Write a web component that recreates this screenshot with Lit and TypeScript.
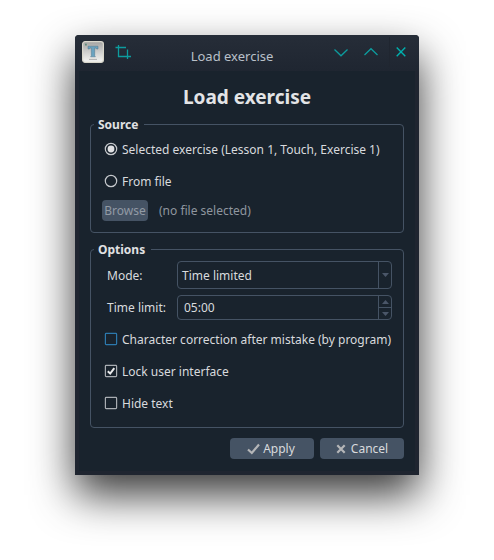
import { LitElement, html, css, svg } from "lit";
import { customElement, property, state } from "lit/decorators.js";
import { classMap } from "lit/directives/class-map.js";

const arrow = (up: boolean) => svg`<path d=${up ? "M0 4L3.5 0L7 4Z" : "M0 0L3.5 4L7 0Z"} fill="#4a5668"/>`;

@customElement("title-bar")
class TitleBar extends LitElement {
  @property() label = "";

  static styles = css`
    :host {
      display: flex;
      height: 36px;
      box-sizing: border-box;
      padding: 0 6px 0 7px;
      background: linear-gradient(#262d38, #1f2631);
      border-radius: 4px 4px 0 0;
      font-size: 13px;
      color: #b9c0c9;
    }
    .app { margin-top: 6px; width: 22px; height: 22px; }
    .crop { margin: 9px 0 0 10px; width: 18px; height: 16px; }
    .label { flex: 1; text-align: center; line-height: 18px; margin-top: 12px; padding-left: 6px; white-space: nowrap; }
    .buttons { display: flex; }
    .wb { width: 30px; height: 34px; }
    .wb.last { width: 24px; margin-left: 3px; }
    svg { display: block; flex: none; }
  `;

  render() {
    return html`
      <svg class="app" viewBox="0 0 22 22">
        <defs>
          <linearGradient id="key" x1="0" y1="0" x2="0" y2="1">
            <stop offset="0" stop-color="#a3a3a2" /><stop offset=".5" stop-color="#cfcfce" /><stop offset="1" stop-color="#f6f6f4" />
          </linearGradient>
        </defs>
        <rect x=".6" y=".6" width="20.8" height="20.8" rx="2.6" fill="url(#key)" stroke="#d9d7cc" stroke-width="1.2" />
        <rect x="3" y="2.7" width="1.8" height="1.8" fill="#5f8b7c" />
        <path d="M6 5.2H16V8H14.6L14 7H12.7V14.8L13.4 15.8H8.6L9.3 14.8V7H8L7.4 8H6Z" fill="#6aa3c0" stroke="#50778c" stroke-width=".5" />
        <path d="M7 18.4H15" stroke="#a8a8a8" stroke-width=".9" />
      </svg>
      <svg class="crop" viewBox="0 0 18 16">
        <path d="M1.5 3.5H12M4.5 1V12.5H17M13.5 5.5V15" fill="none" stroke="#0d9c9e" stroke-width="1.3" />
      </svg>
      <span class="label">${this.label}</span>
      <div class="buttons">
        <svg class="wb" viewBox="0 0 30 34"><path d="M8.5 14.5L15 20.8L21.5 14.5" fill="none" stroke="#0d9c9e" stroke-width="1.3" /></svg>
        <svg class="wb" viewBox="0 0 30 34"><path d="M8.5 20L15 13.7L21.5 20" fill="none" stroke="#0d9c9e" stroke-width="1.3" /></svg>
        <svg class="wb last" viewBox="0 0 24 34"><path d="M.5 2V32" stroke="#202630" stroke-width="1" /><path d="M7.7 12.6L16.3 21.2M16.3 12.6L7.7 21.2" fill="none" stroke="#00b0ae" stroke-width="1.4" /></svg>
      </div>
    `;
  }
}

@customElement("choice-row")
class ChoiceRow extends LitElement {
  @property() kind: "radio" | "check" = "check";
  @property({ type: Boolean }) checked = false;
  @property({ type: Boolean }) hot = false;

  static styles = css`
    :host { display: flex; align-items: center; height: 32px; padding-left: 13px; gap: 4px; white-space: nowrap; }
    svg { width: 14px; height: 14px; flex: none; color: #a9adb2; }
    svg.radio { color: #c6c9cd; }
    svg.hot { color: #2c79ad; }
    .text { padding-top: 2px; }
  `;

  render() {
    return html`
      <svg viewBox="0 0 14 14" class=${classMap({ hot: this.hot, radio: this.kind === "radio" })} fill="none" stroke="currentColor" stroke-width="1.2">
        ${this.kind === "radio"
          ? svg`<circle cx="7" cy="7" r="5.7"/>${this.checked ? svg`<circle cx="7" cy="7" r="3.4" fill="#e0e1e3" stroke="none"/>` : ""}`
          : svg`<rect x="1.4" y="1.4" width="11.2" height="11.2" rx=".8"/>${this.checked ? svg`<path d="M3.8 7.2L6.2 9.6L10.3 4.2" stroke="#e8e9ea" stroke-width="2"/>` : ""}`}
      </svg>
      <span class="text"><slot></slot></span>
    `;
  }
}

@customElement("app-root")
class AppRoot extends LitElement {
  @state() private mode = "Time limited";
  @state() private limit = "05:00";

  static styles = css`
    :host {
      display: block;
      width: 494px;
      height: 560px;
      box-sizing: border-box;
      padding: 35px 75px 0;
      background: #fff;
      overflow: hidden;
      font-family: "Noto Sans", sans-serif;
      font-size: 12px;
      line-height: 18px;
      color: #d8dadd;
    }
    .window {
      width: 344px;
      height: 440px;
      box-sizing: border-box;
      padding: 0 4px 4px;
      background: #1f2530;
      border-radius: 4px 4px 0 0;
      box-shadow: 0 20px 43px rgba(0, 0, 0, 0.78);
    }
    title-bar { margin: 0 -4px; }
    .content {
      height: 400px;
      box-sizing: border-box;
      padding: 0 11px;
      background: #19232d;
      display: flex;
      flex-direction: column;
    }
    h1 { margin: 0; height: 44px; padding-top: 12px; box-sizing: border-box; font-size: 19px; line-height: 28px; text-align: center; color: #e3e4e6; }
    fieldset { margin: 0; padding: 0; box-sizing: border-box; border: 1px solid #455364; border-radius: 4px; min-width: 0; }
    .source { height: 118px; }
    .options { height: 188px; margin-top: 7px; }
    legend { margin-left: 3px; padding: 0 6px 0 4px; height: 19px; line-height: 19px; font-weight: 700; color: #e0e1e3; }
    .source choice-row:first-of-type { margin-top: -1px; }
    .browse { display: flex; align-items: center; gap: 11px; padding: 3px 0 0 11px; color: #8f969f; }
    .btn { display: flex; align-items: center; justify-content: center; height: 21px; border-radius: 4px; background: #455364; color: #d8dadd; box-sizing: border-box; }
    .btn.off { width: 46px; color: #929aa4; }
    .field { display: flex; align-items: center; padding-left: 16px; }
    .field.first { margin: 2px 0 6px; }
    .field.last { margin-bottom: 3px; }
    .name { width: 70px; }
    .first .name, .first .value { padding-top: 2px; }
    .last .name, .last .value { padding-top: 1px; }
    .box { display: flex; width: 215px; height: 28px; box-sizing: border-box; border: 1px solid #455364; border-radius: 4px; }
    .box.spin { height: 25px; }
    .value { flex: 1; padding-left: 4px; align-self: center; }
    .spin .value { padding-left: 6px; }
    .arrows { width: 12px; border-left: 1px solid #455364; display: flex; flex-direction: column; }
    .cell { flex: 1; display: flex; align-items: center; justify-content: center; }
    .cell + .cell { border-top: 1px solid #455364; }
    .cell svg { width: 7px; height: 4px; }
    .actions { display: flex; justify-content: flex-end; gap: 6px; margin-top: 10px; }
    .actions .btn { width: 84px; }
    .actions .apply { padding-right: 2px; }
    .tick { width: 13px; height: 12px; margin-right: 3px; }
    .cross { width: 10px; height: 10px; margin-right: 5px; }
  `;

  render() {
    return html`
      <div class="window">
        <title-bar label="Load exercise"></title-bar>
        <div class="content">
          <h1>Load exercise</h1>
          <fieldset class="source">
            <legend>Source</legend>
            <choice-row kind="radio" checked>Selected exercise (Lesson 1, Touch, Exercise 1)</choice-row>
            <choice-row kind="radio">From file</choice-row>
            <div class="browse"><span class="btn off">Browse</span><span>(no file selected)</span></div>
          </fieldset>
          <fieldset class="options">
            <legend>Options</legend>
            <div class="field first">
              <span class="name">Mode:</span>
              <div class="box">
                <span class="value">${this.mode}</span>
                <div class="arrows"><span class="cell"><svg viewBox="0 0 7 4">${arrow(false)}</svg></span></div>
              </div>
            </div>
            <div class="field last">
              <span class="name">Time limit:</span>
              <div class="box spin">
                <span class="value">${this.limit}</span>
                <div class="arrows">
                  <span class="cell"><svg viewBox="0 0 7 4">${arrow(true)}</svg></span>
                  <span class="cell"><svg viewBox="0 0 7 4">${arrow(false)}</svg></span>
                </div>
              </div>
            </div>
            <choice-row hot>Character correction after mistake (by program)</choice-row>
            <choice-row checked>Lock user interface</choice-row>
            <choice-row>Hide text</choice-row>
          </fieldset>
          <div class="actions">
            <div class="btn apply"><svg class="tick" viewBox="0 0 13 12"><path d="M1 6.5L4.8 10L12 1.5" fill="none" stroke="#b5b6b8" stroke-width="2.2" /></svg>Apply</div>
            <div class="btn"><svg class="cross" viewBox="0 0 10 10"><path d="M1.3 1.3L8.7 8.7M8.7 1.3L1.3 8.7" fill="none" stroke="#b5b6b8" stroke-width="2.2" /></svg>Cancel</div>
          </div>
        </div>
      </div>
    `;
  }
}
